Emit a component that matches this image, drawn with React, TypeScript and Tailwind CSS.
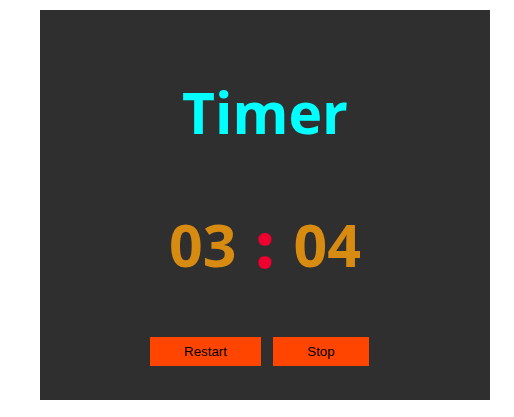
export default function App() {
  return (
    <div className="min-h-screen bg-white pt-[10px] pl-[40px]">
      <div className="flex h-[390px] w-[450px] flex-col items-center bg-[#2f2f2f] font-['Open_Sans',sans-serif]">
        <h1 className="mt-[62px] text-[57px] font-bold leading-[80px] text-[#00ffff]">Timer</h1>

        <div className="mt-[52px] flex items-center text-[59px] font-bold leading-[80px] text-[#d78b10]">
          <span>03</span>
          <span className="mx-[20px] text-[#ee0030] [-webkit-text-stroke:3px_#ee0030]">:</span>
          <span>04</span>
        </div>

        <div className="mt-[53px] mr-[11px] flex gap-[12px] font-['Liberation_Sans',Arial,sans-serif] text-[13.333px] text-black">
          <button type="button" className="h-[29px] w-[111px] bg-[#ff4500]">
            Restart
          </button>
          <button type="button" className="h-[29px] w-[96px] bg-[#ff4500]">
            Stop
          </button>
        </div>
      </div>
    </div>
  );
}
